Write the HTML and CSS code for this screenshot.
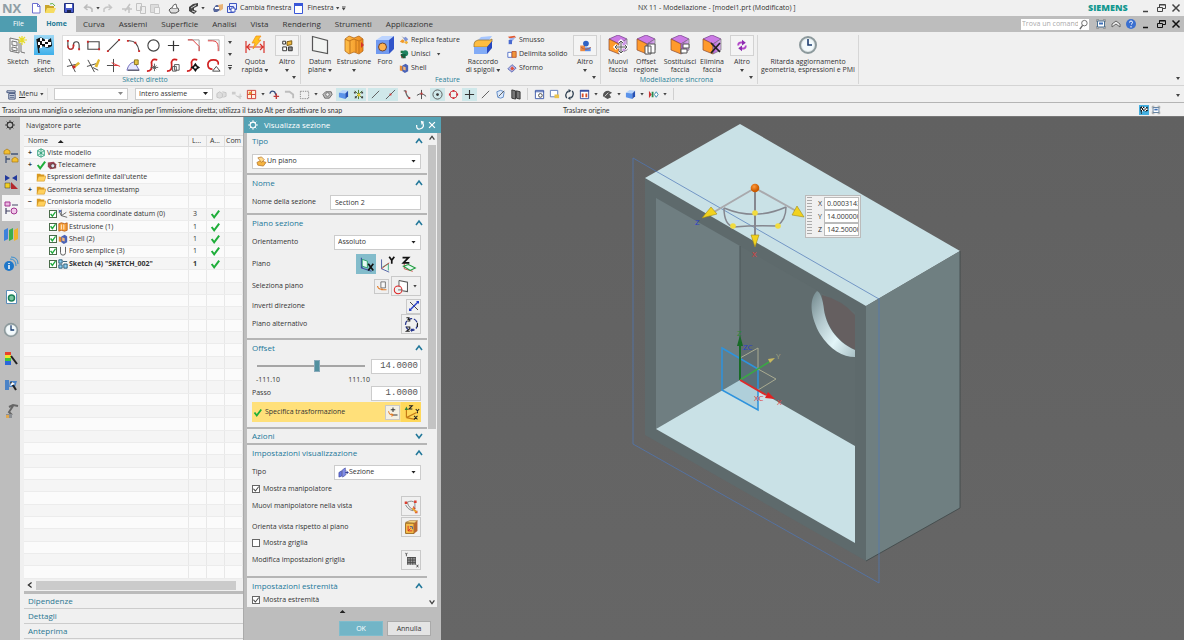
FILE: index.html
```
<!DOCTYPE html>
<html lang="it">
<head>
    <meta charset="UTF-8">
    <meta name="viewport" content="width=device-width, initial-scale=1.0">
    <title>NX 11 - Modellazione</title>
    <link rel="stylesheet" href="styles.css">
    <script src="app.js" defer></script>
</head>

<body>
    <!-- shared icons -->
    <svg class="defs" width="0" height="0">
        <defs>
            <linearGradient id="gOrange"><stop offset="0" stop-color="#ffc04a"/><stop offset="1" stop-color="#f08a1c"/></linearGradient>
            <linearGradient id="gPurple"><stop offset="0" stop-color="#b45ad8"/><stop offset="1" stop-color="#d9b4ec"/></linearGradient>
            <symbol id="new" viewBox="0 0 12 12"><path d="M2.500 1.500h5l2.500 2.500v7h-7.500z" fill="#fff" stroke="#6c6fd0"/><path d="M7.500 1.500v3h2.500" fill="none" stroke="#6c6fd0"/></symbol>
            <symbol id="open" viewBox="0 0 12 12"><path d="M1 3h4l1 1h4v7H1z" fill="#c9a52c"/><path d="M3 6h9l-2 5H1z" fill="#f6dc62"/><path d="M6 2q3-2 5 2" fill="none" stroke="#5bb04a"/></symbol>
            <symbol id="save" viewBox="0 0 12 12"><path d="M1.500 1.500h9v9h-9z" fill="#4a5ccc" stroke="#22307c"/><path d="M3 2h6v4H3z" fill="#fff"/><path d="M4 8h4v3H4z" fill="#1b2350"/></symbol>
            <symbol id="undo" viewBox="0 0 12 12"><path d="M10 10V7Q8 4 3 5.500M5.500 2.500L2.500 5.500l3 2.500" fill="none" stroke="#bbb" stroke-width="1.500"/></symbol>
            <symbol id="redo" viewBox="0 0 12 12"><path d="M2 10V7Q4 4 9 5.500M6.500 2.500L9.500 5.500l-3 2.500" fill="none" stroke="#c6c6c6" stroke-width="1.500"/></symbol>
            <symbol id="cut" viewBox="0 0 12 12"><path d="M1 7h10M4 9l5-7M8 5v6" fill="none" stroke="#c4c4c4" stroke-width="1.500"/></symbol>
            <symbol id="copy" viewBox="0 0 12 12"><path d="M1.500 1.500h5v7h-5zM5.500 4.500h5v7h-5z" fill="#eee" stroke="#c2c2c2"/></symbol>
            <symbol id="paste" viewBox="0 0 12 12"><path d="M1.500 2.500h8v8h-8z" fill="#ddd" stroke="#c6c6c6"/><path d="M5.500 5.500h5v6h-5z" fill="#f4f4f4" stroke="#c6c6c6"/></symbol>
            <symbol id="print" viewBox="0 0 12 12"><path d="M1 8l2-2h7l1 3-3 2H3z" fill="#ddd" stroke="#555"/><path d="M4 6q1-4 4-4l1 4" fill="#fff" stroke="#666"/></symbol>
            <symbol id="planet" viewBox="0 0 12 12"><path d="M2 9V5l4-3 5-1v3L7 6v2l3 1-3 3z" fill="#444"/><path d="M4 6l5-3M5 9l3 1" stroke="#ccc"/></symbol>
            <symbol id="eraser" viewBox="0 0 12 12"><path d="M1 7l3-4h4v5l-3 2H2z" fill="#56669c"/><path d="M6 3l5-1v5L8 9z" fill="#e9b376"/><path d="M3 5h4v2H3z" fill="#fff"/></symbol>
            <symbol id="wins" viewBox="0 0 12 12"><path d="M3.500 1.500h7v6h-7zM1.500 4.500h6v6h-6z" fill="#e9edff" stroke="#3d55c0"/><path d="M5 6h4v4H5z" fill="#fff" stroke="#3d55c0"/></symbol>
            <symbol id="win" viewBox="0 0 12 12"><path d="M1.500 1.500h8v10h-8z" fill="#fff" stroke="#3856d8"/><path d="M1 1h9v3H1z" fill="#3856d8"/></symbol>
            <symbol id="min" viewBox="0 0 12 12"><path d="M3 9.500h5" stroke="currentColor" stroke-width="1.500"/></symbol>
            <symbol id="restore" viewBox="0 0 12 12"><path d="M4.500 5V2.500h6v4H8M2.500 5.500h5v4h-5zM4 3h6" fill="none" stroke="currentColor"/></symbol>
            <symbol id="close" viewBox="0 0 12 12"><path d="M2.500 2.500l7 7M9.500 2.500l-7 7" stroke="currentColor" stroke-width="1.500"/></symbol>
            <symbol id="search" viewBox="0 0 12 12"><circle cx="7" cy="4.500" r="3" fill="none" stroke="#666"/><path d="M5 7l-3 4" stroke="#666" stroke-width="1.500"/></symbol>
            <symbol id="full" viewBox="0 0 12 12"><path d="M1.500 4V1.500H4M8 1.500h2.500V4M10.500 8v2.500H8M4 10.500H1.500V8" fill="none" stroke="#999"/><path d="M2.500 3h7v6h-7z" fill="#fff" stroke="#4a6f90"/><path d="M4 4.500h4v2H4z" fill="#3d6fb8"/></symbol>
            <symbol id="roof" viewBox="0 0 12 12"><path d="M2 6l4-3 4 3v3L6 6 2 9z" fill="#eee" stroke="#666"/></symbol>
            <symbol id="help" viewBox="0 0 12 12"><circle cx="6" cy="6" r="5" fill="#3a6fd0"/><path d="M4.500 4.500q0-1.500 1.500-1.500t1.500 1.500q0 1-1.500 2M6 8v1.500" stroke="#fff" fill="none"/></symbol>

            <!-- ribbon, large -->
            <symbol id="sketch" viewBox="0 0 20 20"><path d="M2 3l9 2v13l-9-2zM4 6l5 1v4l-5-1zM4 12l5 1v3l-5-1z" fill="#f4f4f4" stroke="#777" stroke-width="1"/><path d="M13 8v9l4 1" fill="none" stroke="#777"/><path d="M14 1v9M10 5h9M11 2l6 6M17 2l-6 6" stroke="#e6dc28" stroke-width="1.200"/></symbol>
            <symbol id="flag" viewBox="0 0 20 20"><path d="M3 4l2 14" stroke="#222" stroke-width="1.500"/><path d="M3 4q4-3 7 0t7-1l1 8q-4 3-7 1t-7 2z" fill="#111"/><path d="M6 3h2v3H6zM11 4h3v3h-3zM4 7h2v3H4zM8 6h3v3H8zM14 7h3v3h-3zM6 10h2v3H6zM11 9h3v3h-3z" fill="#fff"/></symbol>
            <symbol id="dim" viewBox="0 0 20 20"><path d="M1 6v12M19 6v12M2 12h16M5 9l-3 3 3 3M15 9l3 3-3 3" fill="none" stroke="#d9332b" stroke-width="1.200"/><path d="M11 1h5l-3 4h3l-8 9 2-6H7z" fill="#ffc21e" stroke="#ef8b1b" stroke-width=".7"/></symbol>
            <symbol id="altro" viewBox="0 0 20 20"><path d="M5.500 5.500h3v3h-3zM5.500 11.500h4v4h-4z" fill="#fff" stroke="#333"/><path d="M10 6l5-1v4l-5 1z" fill="#f0b73a" stroke="#7b5b12"/><path d="M11.500 11.500h4v4h-4z" fill="#888" stroke="#333"/></symbol>
            <symbol id="datum" viewBox="0 0 20 20"><path d="M2.500 1.500l15 4v13l-15-3z" fill="#f2f4f2" stroke="#555" stroke-width="1.200"/></symbol>
            <symbol id="extrude" viewBox="0 0 20 20"><path d="M1 4l4-3 5 2 5-2 4 3v12l-4 3-5-2-5 2-4-3z" fill="url(#gOrange)" stroke="#b5691a" stroke-width=".8"/><path d="M1 4l4 2 5-2 5 2 4-2M6 6v12M12 5v12M15 6v12" fill="none" stroke="#c4741a"/><path d="M17 7l3 3-3 3z" fill="#d5352b"/></symbol>
            <symbol id="hole" viewBox="0 0 20 20"><path d="M1 5l6-4h12l-5 4z" fill="#bcd4ff"/><path d="M1 5h13v14H1z" fill="#719af0"/><path d="M14 5l5-4v13l-5 5z" fill="#3154c9"/><circle cx="7.500" cy="12" r="4" fill="#ffb24e" stroke="#6c4436"/></symbol>
            <symbol id="blend" viewBox="0 0 20 20"><path d="M1 9l7-7 11-1-5 7z" fill="#a6c6ff"/><path d="M1 9q0-3 4-4h12l2-1v3l-5 5H1z" fill="#ffbd40" stroke="#8c6d30" stroke-width=".7"/><path d="M1 12h13v7H1z" fill="#82abf6"/><path d="M14 12l5-6v7l-5 6z" fill="#2748c0"/></symbol>
            <symbol id="balls" viewBox="0 0 20 20"><path d="M5 10h5v6H5z" fill="#eb8a44"/><circle cx="11" cy="8" r="3" fill="#2e62c4"/><path d="M10 12h6v4h-6z" fill="#5b8ce4"/><path d="M6 12q5 4 10 0" fill="none" stroke="#b75c3a"/></symbol>
            <symbol id="face" viewBox="0 0 20 20"><path d="M1 4l9-4 9 4-8 5z" fill="#cc7be6" stroke="#703a88" stroke-width=".7"/><path d="M1 4l10 5v10L1 15z" fill="#ff9a2c" stroke="#8a4b35" stroke-width=".7"/><path d="M11 9l8-5v11l-8 4z" fill="url(#gPurple)" stroke="#777" stroke-width=".7"/></symbol>
            <symbol id="fmove" viewBox="0 0 20 20"><use href="#face"/><path d="M13 6v12M7 12h12M11 8l2-2 2 2M11 16l2 2 2-2M9 10l-2 2 2 2M17 10l2 2-2 2" fill="none" stroke="#fff" stroke-width="3"/><path d="M13 6v12M7 12h12M11 8l2-2 2 2M11 16l2 2 2-2M9 10l-2 2 2 2M17 10l2 2-2 2" fill="none" stroke="#555"/></symbol>
            <symbol id="foffset" viewBox="0 0 20 20"><use href="#face"/><path d="M12 9h7v9h-7zM9 11h6v8H9z" fill="#fff" stroke="#555"/></symbol>
            <symbol id="freplace" viewBox="0 0 20 20"><use href="#face"/><path d="M13 9h6v4h-6zM11 14h6v4h-6z" fill="#fff" stroke="#555"/></symbol>
            <symbol id="fdelete" viewBox="0 0 20 20"><use href="#face"/><path d="M9 8l9 9M18 8l-9 10" stroke="#222" stroke-width="1.700"/></symbol>
            <symbol id="swirl" viewBox="0 0 20 20"><path d="M6 10q0-4 5-3M14 10q0 4-5 3" fill="none" stroke="#b247c8" stroke-width="2"/><path d="M10 4l4 3-4 3zM10 10l-4 3 4 3z" fill="#8d2ab0"/></symbol>
            <symbol id="clock" viewBox="0 0 20 20"><circle cx="10" cy="10" r="8" fill="#dfe6e8" stroke="#8c999c" stroke-width="2"/><circle cx="10" cy="10" r="6" fill="#f3fafc"/><path d="M10 4v6h4" fill="none" stroke="#1d3e70" stroke-width="1.600"/></symbol>

            <!-- gallery -->
            <symbol id="g1" viewBox="0 0 16 16"><path d="M2 3v5q0 4 3 4t3-4V7q0-3 3-3t3 4v4" fill="none" stroke="#444" stroke-width="1.200"/><path d="M2 8q0 4 3 4t3-4" fill="none" stroke="#cf2a2a" stroke-width="1.300"/><path d="M1 2h2v2H1zM7 7h2v2H7zM13 11h2v2h-2z" fill="#cf2a2a"/></symbol>
            <symbol id="g2" viewBox="0 0 16 16"><path d="M2 4h12v8H2z" fill="none" stroke="#444" stroke-width="1.200"/><path d="M1 3h2v2H1zM13 11h2v2h-2z" fill="#cf2a2a"/></symbol>
            <symbol id="g3" viewBox="0 0 16 16"><path d="M2 14L14 2" stroke="#444" stroke-width="1.200"/><path d="M1 13h2v2H1zM13 1h2v2h-2z" fill="#cf2a2a"/></symbol>
            <symbol id="g4" viewBox="0 0 16 16"><path d="M2 3q10-1 12 11" fill="none" stroke="#444" stroke-width="1.200"/><path d="M1 2h2v2H1zM9 4h2v2H9zM13 13h2v2h-2z" fill="#cf2a2a"/></symbol>
            <symbol id="g5" viewBox="0 0 16 16"><circle cx="8" cy="8" r="6" fill="none" stroke="#444" stroke-width="1.200"/></symbol>
            <symbol id="g6" viewBox="0 0 16 16"><path d="M8 3v11M2 8h12" stroke="#333" stroke-width="1.300"/></symbol>
            <symbol id="g7" viewBox="0 0 16 16"><path d="M2 2h12v12" fill="none" stroke="#999"/><path d="M2 2h5l7 7v5" fill="none" stroke="#d33"/></symbol>
            <symbol id="g8" viewBox="0 0 16 16"><path d="M2 2h12v12" fill="none" stroke="#aaa"/><path d="M2 3h5q6 0 6 7v4" fill="none" stroke="#d33"/></symbol>
            <symbol id="g9" viewBox="0 0 16 16"><path d="M3 1l7 14M1 9l13-3" stroke="#444"/><path d="M8 9l5-5 2 2-5 4z" fill="#e2b832"/><path d="M7 8h3v3H7z" fill="#cf2a2a"/></symbol>
            <symbol id="g10" viewBox="0 0 16 16"><path d="M2 2l7 13M1 9l10-3" stroke="#444"/><path d="M9 9l4-8 2 1-3 8z" fill="#e2b832"/><path d="M7 10l6 3" stroke="#444"/></symbol>
            <symbol id="g11" viewBox="0 0 16 16"><path d="M8 1v14M1 8h8" stroke="#444"/><path d="M6 5l9 4M8 8h5" stroke="#d33"/></symbol>
            <symbol id="g12" viewBox="0 0 16 16"><path d="M1 13q2-8 8-9l5 9z" fill="#e5e7ff" stroke="#6c68b8"/><path d="M9 2h4v5H9z" fill="#e5c345" stroke="#8a7420"/><path d="M2 13h12" stroke="#444"/></symbol>
            <symbol id="g13" viewBox="0 0 16 16"><path d="M1 14q6 0 5-7t6-5" fill="none" stroke="#d02020" stroke-width="1.800"/><path d="M9 6v8M5 10h8M7 8l4 4M11 8l-4 4" stroke="#555"/></symbol>
            <symbol id="g14" viewBox="0 0 16 16"><path d="M1 14q6 0 5-7t6-5" fill="none" stroke="#d02020" stroke-width="1.800"/><path d="M9 7h5v6H9zM7 9h4v5H7z" fill="#fff" stroke="#555"/></symbol>
            <symbol id="g15" viewBox="0 0 16 16"><path d="M1 14q6 0 5-7t6-5" fill="none" stroke="#d02020" stroke-width="1.800"/><path d="M10 5l2 3 3 2-3 2-2 3-2-3-3-2 3-2z" fill="#111"/><circle cx="10" cy="10" r="1.300" fill="#fff"/></symbol>
            <symbol id="g16" viewBox="0 0 16 16"><path d="M7 12q-5 0-5-5t6-5 5 5" fill="none" stroke="#d02020" stroke-width="1.800"/><path d="M11 9l4 5H7z" fill="#fff" stroke="#444"/></symbol>

            <!-- small feature icons -->
            <symbol id="pattern" viewBox="0 0 12 12"><path d="M1 8l3-3 3 2-2 3z" fill="#f09a2a"/><path d="M5 4l3-2 3 3-3 3z" fill="#7f94d6"/><path d="M6 9l3-2 2 2-2 2z" fill="#f0b23c"/><path d="M4 2l2 2" stroke="#889"/></symbol>
            <symbol id="unite" viewBox="0 0 12 12"><path d="M2 2h3v3H2z" fill="#274"/><circle cx="7.500" cy="5" r="3.500" fill="#1f8460"/><path d="M2 6h6v5H3z" fill="#17603f"/><path d="M2 8l3 3" stroke="#b33"/></symbol>
            <symbol id="shell" viewBox="0 0 12 12"><path d="M1 3l4 1v6L1 9z" fill="#e58a34"/><path d="M4 3l4-2 3 2v7l-4 2-3-2z" fill="#4a63b8"/><path d="M5 4l3 1v4L5 8z" fill="#f1b67c"/></symbol>
            <symbol id="chamfer" viewBox="0 0 12 12"><path d="M1 2l8-1 2 2-8 1z" fill="#e2582f"/><path d="M3 4l7-1-4 5H3z" fill="#9fb7f0"/><path d="M2 6h4v5H2z" fill="#4a6bd0"/></symbol>
            <symbol id="trim" viewBox="0 0 12 12"><path d="M1 4h5v6H1z" fill="#fff" stroke="#4464c4"/><path d="M6 3h5v7H6z" fill="#f0953a" stroke="#b9522b"/></symbol>
            <symbol id="draft" viewBox="0 0 12 12"><path d="M1 7l5-5 5 4-5 5z" fill="#b6bcec" stroke="#5461ae"/><path d="M4 7l2-3 3 3-3 2z" fill="#e0523e"/></symbol>

            <!-- selection bar -->
            <symbol id="menu" viewBox="0 0 12 12"><path d="M1 2h9v2H1zM3 5h7v6H3z" fill="#dfe4ee" stroke="#3c4f78"/><path d="M4 7h5M4 9h5" stroke="#3c4f78"/></symbol>
            <symbol id="t1" viewBox="0 0 12 12"><path d="M1 5l3-2 3 2v4l-3 1-3-1zM7 3l4 1v4l-3 1" fill="#ddd" stroke="#c4c4c4"/></symbol>
            <symbol id="t2" viewBox="0 0 12 12"><path d="M1 3h4v3H1z" fill="#ccc"/><path d="M5 7l5 3M10 5v6M7 8h5" stroke="#c8c8c8"/></symbol>
            <symbol id="t3" viewBox="0 0 12 12"><path d="M1.500 1.500h9v9h-9z" fill="#fff0e0" stroke="#d0342c"/><path d="M6 2v8M2 6h8" stroke="#d0342c"/><path d="M3 3h3v3H3z" fill="#e59a32"/></symbol>
            <symbol id="t4" viewBox="0 0 12 12"><path d="M1 5q1-4 5-2l2 4" fill="none" stroke="#334a7c" stroke-width="1.500"/><path d="M8 5v6M5 8h6" stroke="#c03a3a" stroke-width="1.500"/></symbol>
            <symbol id="t5" viewBox="0 0 12 12"><path d="M1 3h5l4 3v4" fill="none" stroke="#bdbdbd" stroke-width="2"/></symbol>
            <symbol id="t6" viewBox="0 0 12 12"><path d="M1.500 2.500h9v8h-9z" fill="none" stroke="#888" stroke-dasharray="1.500 1"/></symbol>
            <symbol id="t7" viewBox="0 0 12 12"><path d="M1 6l3-3h6l1 3-3 4H3z" fill="#bbb" stroke="#666"/><circle cx="6" cy="6" r="2" fill="#eee" stroke="#777"/></symbol>
            <symbol id="cube" viewBox="0 0 12 12"><path d="M1 4l4-3 6 1-3 3z" fill="#b7d4fa"/><path d="M1 4l7 1v6l-7-2z" fill="#5b93ea"/><path d="M8 5l3-3v6l-3 3z" fill="#2450b4"/></symbol>
            <symbol id="snap" viewBox="0 0 12 12"><path d="M2 2l8 8M10 2l-8 8M6 1v10" stroke="#4d7a28"/><path d="M5 5h3v3H5z" fill="#e9c82f"/><path d="M1 3h2v2H1zM9 8h2v2H9zM9 3h2v2H9zM2 8h2v2H2z" fill="#444"/></symbol>
            <symbol id="ln" viewBox="0 0 12 12"><path d="M2 10l8-8" stroke="#555"/></symbol>
            <symbol id="ln2" viewBox="0 0 12 12"><path d="M1 11L11 1" stroke="#555"/><path d="M5 5h2v2H5z" fill="#c33"/></symbol>
            <symbol id="curve" viewBox="0 0 12 12"><path d="M3 2h2q1 7 5 8" fill="none" stroke="#666" stroke-width="1.300"/><path d="M5 2h1v2H5zM8 9h2v2H8z" fill="#c33"/></symbol>
            <symbol id="inter" viewBox="0 0 12 12"><path d="M1 7q5-4 10 1M6 1v10" fill="none" stroke="#444"/><path d="M5 4h2v2H5z" fill="#c33"/></symbol>
            <symbol id="cen" viewBox="0 0 12 12"><circle cx="6" cy="6" r="5" fill="none" stroke="#555"/><circle cx="6" cy="6" r="1.500" fill="#333"/></symbol>
            <symbol id="quad" viewBox="0 0 12 12"><circle cx="6" cy="6" r="4" fill="none" stroke="#b44"/><path d="M5 1h2v2H5zM5 9h2v2H5zM1 5h2v2H1zM9 5h2v2H9z" fill="#d23"/></symbol>
            <symbol id="plus" viewBox="0 0 12 12"><path d="M6 1v10M1 6h10" stroke="#333" stroke-width="1.200"/></symbol>
            <symbol id="face2" viewBox="0 0 12 12"><path d="M2 3q4-3 8 0l-1 6q-3 2-6 0z" fill="#dbe9fb" stroke="#5b87c4"/><path d="M4 8l6-6" stroke="#555"/></symbol>
            <symbol id="grid2" viewBox="0 0 12 12"><path d="M2 1l4 1v9l-4-1zM7 2l4 1v8l-4-1z" fill="#777" stroke="#333"/></symbol>
            <symbol id="fit" viewBox="0 0 12 12"><path d="M1.500 1.500h9v9h-9zM1 3h10" fill="#fff" stroke="#3b58a8"/><circle cx="7" cy="7" r="2" fill="none" stroke="#444"/></symbol>
            <symbol id="layer" viewBox="0 0 12 12"><path d="M1.500 1.500h8v7h-8z" fill="#fff" stroke="#5d79b8"/><path d="M6 6h5v4H6z" fill="#ebc34b"/></symbol>
            <symbol id="rot" viewBox="0 0 12 12"><path d="M3 10q-3-5 2-8M9 2q3 5-2 8" fill="none" stroke="#345" stroke-width="1.400"/><path d="M5 0v4l3-2zM7 8v4L4 10z" fill="#345"/></symbol>
            <symbol id="tab" viewBox="0 0 12 12"><path d="M1.500 1.500h9v9h-9z" fill="#fff" stroke="#3a4fa0"/><path d="M1 1h10v2H1z" fill="#3a4fa0"/><path d="M3 5h2v4H3zM7 5h2v4H7z" fill="#d8502a"/></symbol>
            <symbol id="shade" viewBox="0 0 12 12"><path d="M1 8q0-6 6-6l4 2-3 2 2 3-4 2z" fill="#555"/><path d="M3 8l4-4" stroke="#ddd"/></symbol>
            <symbol id="assoc" viewBox="0 0 12 12"><path d="M1 2l3 4-3 4z" fill="#c33"/><path d="M4 3h2v6H4z" fill="#2a8b4f"/><path d="M7 6l2-3 2 3-2 3z" fill="#fff" stroke="#38a"/></symbol>

            <!-- navigator -->
            <symbol id="gear" viewBox="0 0 12 12"><circle cx="6" cy="6" r="3.500" fill="none" stroke="currentColor" stroke-width="1.300"/><path d="M6 0v3M6 9v3M0 6h3M9 6h3M2 2l2 2M8 8l2 2M10 2L8 4M4 8l-2 2" stroke="currentColor"/></symbol>
            <symbol id="views" viewBox="0 0 12 12"><path d="M2 3l4-2 4 2v6l-4 2-4-2z" fill="#e8faf3" stroke="#269a73"/><path d="M2 3l8 6M10 3L2 9M6 1v10" stroke="#269a73"/></symbol>
            <symbol id="cam" viewBox="0 0 12 12"><path d="M1 3l7-1 3 3v5l-7 1-3-3z" fill="#9a4256"/><circle cx="7" cy="7" r="2.500" fill="#dbe0f4" stroke="#532"/></symbol>
            <symbol id="folder" viewBox="0 0 12 12"><path d="M1 2h4l1 1h4v7H1z" fill="#d99a22"/><path d="M3 5h9l-2 6H1z" fill="#ffd05c" stroke="#c98b1b" stroke-width=".6"/></symbol>
            <symbol id="csys" viewBox="0 0 12 12"><path d="M4 1v7l7 2M4 8l6-4M1 2l3 6" fill="none" stroke="#555"/><path d="M1 1l3 3M4 1L1 4" stroke="#3a53b8"/></symbol>
            <symbol id="ext" viewBox="0 0 12 12"><path d="M1 2l3-1 4 1 3-1v9l-3 1-4-1-3 1z" fill="#f59b31" stroke="#b65c18"/><path d="M4 3v6M7 3v6" stroke="#fff"/></symbol>
            <symbol id="bore" viewBox="0 0 12 12"><path d="M3 1v7q0 3 3 3t3-3V1" fill="none" stroke="#444"/></symbol>
            <symbol id="skt" viewBox="0 0 12 12"><path d="M1 1h4v4H1zM1 7h4v4H1zM7 6h4v5H7z" fill="#8fd0f2" stroke="#1b4c66"/><path d="M6 3h5" stroke="#1b4c66"/></symbol>
            <symbol id="ok" viewBox="0 0 12 12"><path d="M2 6l3 4 6-8" fill="none" stroke="#1fae3a" stroke-width="2.400"/></symbol>
            <symbol id="s1" viewBox="0 0 16 16"><path d="M1 3l3-2 3 2v3H1zM9 11l3-2 3 2v3H9z" fill="#f3bf30" stroke="#a97a12" stroke-width=".7"/><path d="M3 8v7M3 11h4M8 6h7" stroke="#457" stroke-width="1.300"/></symbol>
            <symbol id="s2" viewBox="0 0 16 16"><path d="M2 1v6l5-3zM14 1v6L9 4z" fill="#233a9c"/><path d="M2 9h5v5H2z" fill="#f3cf22" stroke="#333" stroke-width=".5"/><path d="M8 8l7 7H8z" fill="#b3272c"/></symbol>
            <symbol id="s3" viewBox="0 0 16 16"><path d="M2 2h5v4H2z" fill="#eab7e0" stroke="#a2348f"/><path d="M3 8v6M3 11h4M9 5h6" stroke="#446" stroke-width="1.200"/><circle cx="11" cy="11" r="3" fill="#f0c8e9" stroke="#a2348f"/></symbol>
            <symbol id="s4" viewBox="0 0 16 16"><path d="M1 4l4-2v11l-4 2z" fill="#3c82dc"/><path d="M6 4l4-2v11l-4 2z" fill="#3cae4c"/><path d="M11 4l4-2v11l-4 2z" fill="#f1b32c"/></symbol>
            <symbol id="s5" viewBox="0 0 16 16"><circle cx="6" cy="10" r="5" fill="#1f77c9"/><path d="M6 7v1M6 9v4" stroke="#fff" stroke-width="1.500"/><path d="M7 3q6 0 6 7M8 1q7 0 7 7" fill="none" stroke="#3b8fd0"/></symbol>
            <symbol id="s6" viewBox="0 0 16 16"><path d="M3.500 1.500h7l3 3v10h-10z" fill="#fff" stroke="#5a8db8"/><circle cx="8.500" cy="9" r="3" fill="#7cc6a0" stroke="#1d8158" stroke-width="1.500"/></symbol>
            <symbol id="s8" viewBox="0 0 16 16"><path d="M2 1h6v3H2z" fill="#e8402c"/><path d="M2 4h6v3H2z" fill="#f2e22d"/><path d="M2 7h6v3H2z" fill="#3fc63c"/><path d="M2 10h6v4H2z" fill="#2c67dc"/><path d="M8 5l6 8" stroke="#222" stroke-width="2"/></symbol>
            <symbol id="s9" viewBox="0 0 16 16"><path d="M2 3h4v10H2zM7 4h7l-2 6H6z" fill="#4b83c7"/><path d="M8 5l5 8" stroke="#222" stroke-width="2"/><path d="M7 9l2-4 3 2z" fill="#fff"/></symbol>
            <symbol id="s10" viewBox="0 0 16 16"><path d="M6 4l4-2 5 1M10 3l-4 6 3 3" fill="none" stroke="#666" stroke-width="2"/><path d="M3 11h6v4H3z" fill="#8b8f94"/><path d="M3 12h3v3H3z" fill="#e0a850"/></symbol>

            <!-- dialog -->
            <symbol id="plane1" viewBox="0 0 12 12"><path d="M1 7l4-2 6 2-3 4-6-1z" fill="#f5b441" stroke="#a9661b" stroke-width=".7"/><path d="M2 2l4-1 3 3-3 3z" fill="#ffd988" stroke="#a9661b" stroke-width=".7"/></symbol>
            <symbol id="px" viewBox="0 0 20 20"><path d="M4 2v12l12 4M4 14l6-5" fill="none" stroke="#3c4e9c" stroke-width="1.300"/><path d="M5 4l6 2v8l-6-2z" fill="#e6faf2" stroke="#1f9a5d"/><path d="M12 9l6 8M18 9l-6 8" stroke="#111" stroke-width="2"/></symbol>
            <symbol id="py" viewBox="0 0 20 20"><path d="M3 4v11l9 4" fill="none" stroke="#3c4e9c"/><path d="M4 13l7-4v8" fill="#e6faf2" stroke="#2ea277"/><path d="M3 15l9-7" stroke="#c33"/><path d="M12 1l3 4 3-4M15 5v4" fill="none" stroke="#111" stroke-width="2"/></symbol>
            <symbol id="pz" viewBox="0 0 20 20"><path d="M5 7v8l10 3" fill="none" stroke="#c33"/><path d="M4 12l6-2 8 4-6 3z" fill="#e6faf2" stroke="#1f9a3d" stroke-width="1.300"/><path d="M3 2h7l-6 6h7" fill="none" stroke="#111" stroke-width="2"/></symbol>
            <symbol id="psel" viewBox="0 0 16 16"><path d="M6.500 2.500h6v8h-6z" fill="#f7f7f7" stroke="#555"/><path d="M2 8q1 5 7 4M7 13h7" fill="none" stroke="#e27b28" stroke-width="1.600"/></symbol>
            <symbol id="pinf" viewBox="0 0 20 20"><path d="M7 3l10 2v11l-6-1" fill="#fff" stroke="#555" stroke-width="1.200"/><path d="M7 3v7" stroke="#555"/><circle cx="6" cy="14" r="4.500" fill="none" stroke="#d22" stroke-width="1.200"/><path d="M6 14h5" stroke="#555"/></symbol>
            <symbol id="inv" viewBox="0 0 12 12"><path d="M2 2l8 8" stroke="#444"/><path d="M10 2l-8 8" stroke="#2840c8" stroke-width="1.500"/><path d="M8 1h3v3zM1 8v3h3z" fill="#2840c8"/></symbol>
            <symbol id="alt" viewBox="0 0 20 20"><circle cx="10" cy="10" r="7" fill="none" stroke="#26348c" stroke-width="1.500" stroke-dasharray="5 2"/><path d="M4 2h3l-1 2h2v2H5M17 8v5M4 13h4v2l-4 3h4" fill="none" stroke="#222" stroke-width="1.200"/><path d="M13 15l-3 4-1-4z" fill="#26348c"/></symbol>
            <symbol id="pt" viewBox="0 0 16 16"><path d="M8 2v6M5 5h6M8 12h6" stroke="#333" stroke-width="1.300"/><path d="M2 7q1 5 6 5M6 10l2 2-2 2" fill="none" stroke="#e27b28" stroke-width="1.400"/></symbol>
            <symbol id="xyz" viewBox="0 0 20 20"><path d="M4 7v9M4 16l12-6M4 16l10 2" stroke="#c57b16" stroke-width="1.400"/><path d="M7 2h4l-4 4h4M15 6l2 2 2-2M17 8v3M13 14l4 4M17 14l-4 4" fill="none" stroke="#222" stroke-width="1.200"/><path d="M2 7l2-4 2 4z" fill="#2f7f37"/></symbol>
            <symbol id="sez" viewBox="0 0 12 12"><path d="M1 6l3-2v6l-3 1z" fill="#6676e0" stroke="#27308c" stroke-width=".6"/><path d="M5 3l3-2v8l-3 2z" fill="#8793ee" stroke="#27308c" stroke-width=".6"/><path d="M8 6h3M9 4l2 2-2 2" fill="none" stroke="#27308c"/></symbol>
            <symbol id="mani" viewBox="0 0 20 20"><path d="M5 5q2 8 10 10M5 5q6-3 9 1v7M3 8q3 6 9 7" fill="none" stroke="#777"/><path d="M2 4h3v3H2zM13 3h3v3h-3zM12 9l3 4-3 1zM14 15h3v3h-3z" fill="#db3f30"/><path d="M11 12l5 5" stroke="#e8a32a" stroke-width="2"/></symbol>
            <symbol id="orient" viewBox="0 0 20 20"><path d="M3 4l5-2h9l-4 3z" fill="#ffe08a" stroke="#8f5d12" stroke-width=".7"/><path d="M3 5h10v12H3z" fill="#f9bf4b" stroke="#8f5d12"/><path d="M13 5l4-3v12l-4 3z" fill="#b8672e"/><path d="M6 8v6h5M6 14l3-3" fill="none" stroke="#d02020"/><path d="M8 9h3v3" stroke="#234ba8" fill="none"/></symbol>
            <symbol id="gridm" viewBox="0 0 20 20"><path d="M5 6h10v9H5z" fill="#999"/><path d="M5 6.500h10M5 9.500h10M5 12.500h10M5.500 6v9M8.500 6v9M11.500 6v9M14.500 6v9" stroke="#444"/><path d="M3 1l1 2 1-2M4 3v2M16 15l2 3M18 15l-2 3" stroke="#444" fill="none"/></symbol>
            <symbol id="up" viewBox="0 0 10 10"><path d="M2 7l3-4 3 4" fill="none" stroke="currentColor" stroke-width="1.600"/></symbol>
            <symbol id="down" viewBox="0 0 10 10"><path d="M2 3l3 4 3-4" fill="none" stroke="currentColor" stroke-width="1.600"/></symbol>
            <symbol id="reset" viewBox="0 0 12 12"><path d="M9.500 4q2 5-3 6.500T2 6" fill="none" stroke="#fff" stroke-width="1.500"/><path d="M7 1l4 1-3 4z" fill="#fff"/></symbol>
        </defs>
    </svg>

    <header class="titlebar">
        <b class="logo">NX</b>
        <div class="quick">
            <svg><use href="#new"/></svg>
            <svg><use href="#open"/></svg>
            <i class="gap"></i>
            <svg><use href="#save"/></svg>
            <i class="gap"></i>
            <svg><use href="#undo"/></svg>
            <i class="caret"></i>
            <svg><use href="#redo"/></svg>
            <i class="gap"></i>
            <svg><use href="#cut"/></svg>
            <svg><use href="#copy"/></svg>
            <svg><use href="#paste"/></svg>
            <i class="gap"></i>
            <svg><use href="#print"/></svg>
            <i class="gap"></i>
            <svg><use href="#planet"/></svg>
            <i class="caret"></i>
            <i class="gap"></i>
            <svg><use href="#eraser"/></svg>
            <svg><use href="#wins"/></svg>
            <a href="#">Cambia finestra</a>
            <svg><use href="#win"/></svg>
            <a href="#">Finestra</a>
            <i class="caret"></i>
            <i class="caret bar"></i>
        </div>
        <p class="doc-title">NX 11 - Modellazione - [model1.prt (Modificato) ]</p>
        <b class="brand">SIEMENS</b>
        <div class="win-btns">
            <svg><use href="#min"/></svg>
            <svg><use href="#restore"/></svg>
            <svg><use href="#close"/></svg>
        </div>
    </header>

    <nav class="tabs">
        <a class="file" href="#">File</a>
        <a class="active" href="#">Home</a>
        <a href="#">Curva</a>
        <a href="#">Assiemi</a>
        <a href="#">Superficie</a>
        <a href="#">Analisi</a>
        <a href="#">Vista</a>
        <a href="#">Rendering</a>
        <a href="#">Strumenti</a>
        <a href="#">Applicazione</a>
        <div class="finder">
            <input type="text" placeholder="Trova un comand" aria-label="Trova un comando">
            <svg><use href="#search"/></svg>
        </div>
        <div class="win-btns dark">
            <svg><use href="#full"/></svg>
            <svg><use href="#roof"/></svg>
            <svg><use href="#help"/></svg>
            <svg><use href="#min"/></svg>
            <svg><use href="#restore"/></svg>
            <svg><use href="#close"/></svg>
        </div>
    </nav>

    <section class="ribbon">
        <div class="group g-sketch">
            <div class="tools">
                <button class="tool w24"><svg><use href="#sketch"/></svg>Sketch</button>
                <button class="tool w28 on"><svg><use href="#flag"/></svg><span>Fine</span><span>sketch</span></button>
                <div class="gallery">
                    <svg><use href="#g1"/></svg><svg><use href="#g2"/></svg><svg><use href="#g3"/></svg><svg><use href="#g4"/></svg>
                    <svg><use href="#g5"/></svg><svg><use href="#g6"/></svg><svg><use href="#g7"/></svg><svg><use href="#g8"/></svg>
                    <svg><use href="#g9"/></svg><svg><use href="#g10"/></svg><svg><use href="#g11"/></svg><svg><use href="#g12"/></svg>
                    <svg><use href="#g13"/></svg><svg><use href="#g14"/></svg><svg><use href="#g15"/></svg><svg><use href="#g16"/></svg>
                </div>
                <div class="pager"><i class="caret"></i><i class="caret"></i><i class="caret bar"></i></div>
                <button class="tool w40"><svg><use href="#dim"/></svg><span>Quota</span><span>rapida <i class="caret"></i></span></button>
                <button class="tool w24 boxed"><svg><use href="#altro"/></svg>Altro<i class="caret"></i></button>
            </div>
            <h2>Sketch diretto</h2>
            <i class="caret corner"></i>
        </div>
        <div class="group g-feature">
            <div class="tools">
                <button class="tool w34"><svg><use href="#datum"/></svg><span>Datum</span><span>plane <i class="caret"></i></span></button>
                <button class="tool w34"><svg><use href="#extrude"/></svg>Estrusione<i class="caret"></i></button>
                <button class="tool w28"><svg><use href="#hole"/></svg>Foro</button>
                <div class="stack">
                    <button><svg><use href="#pattern"/></svg>Replica feature</button>
                    <button><svg><use href="#unite"/></svg>Unisci <i class="caret"></i></button>
                    <button><svg><use href="#shell"/></svg>Shell</button>
                </div>
                <button class="tool w40"><svg><use href="#blend"/></svg><span>Raccordo</span><span>di spigoli <i class="caret"></i></span></button>
                <div class="stack">
                    <button><svg><use href="#chamfer"/></svg>Smusso</button>
                    <button><svg><use href="#trim"/></svg>Delimita solido</button>
                    <button><svg><use href="#draft"/></svg>Sformo</button>
                </div>
                <button class="tool w24 boxed"><svg><use href="#balls"/></svg>Altro<i class="caret"></i></button>
            </div>
            <h2>Feature</h2>
            <i class="caret corner"></i>
        </div>
        <div class="group g-sync">
            <div class="tools">
                <button class="tool w28"><svg><use href="#fmove"/></svg><span>Muovi</span><span>faccia</span></button>
                <button class="tool w28"><svg><use href="#foffset"/></svg><span>Offset</span><span>regione</span></button>
                <button class="tool w40"><svg><use href="#freplace"/></svg><span>Sostituisci</span><span>faccia</span></button>
                <button class="tool w24"><svg><use href="#fdelete"/></svg><span>Elimina</span><span>faccia</span></button>
                <button class="tool w24 boxed last"><svg><use href="#swirl"/></svg>Altro<i class="caret"></i></button>
            </div>
            <h2>Modellazione sincrona</h2>
            <i class="caret corner"></i>
        </div>
        <div class="group g-delay">
            <div class="tools">
                <button class="tool wide"><svg><use href="#clock"/></svg><span>Ritarda aggiornamento</span><span>geometria, espressioni e PMI</span></button>
            </div>
        </div>
        <i class="caret far"></i>
    </section>

    <section class="selbar">
        <button class="menu-btn"><svg><use href="#menu"/></svg><span><u>M</u>enu</span> <i class="caret"></i></button>
        <div class="dd filter"><select aria-label="Filtro tipo" disabled><option></option></select></div>
        <div class="dd scope"><select aria-label="Ambito selezione"><option>Intero assieme</option></select></div>
        <div class="snaps">
            <svg><use href="#t1"/></svg>
            <svg><use href="#t2"/></svg>
            <svg><use href="#t3"/></svg>
            <i class="caret"></i>
            <svg><use href="#t4"/></svg>
            <svg><use href="#t5"/></svg>
            <svg><use href="#t6"/></svg>
            <i class="caret"></i>
            <svg><use href="#t7"/></svg>
            <div class="lit">
                <svg><use href="#cube"/></svg>
                <svg><use href="#snap"/></svg>
            </div>
            <div class="lit">
                <svg><use href="#ln"/></svg>
                <svg><use href="#ln2"/></svg>
            </div>
            <svg><use href="#curve"/></svg>
            <svg><use href="#inter"/></svg>
            <div class="lit"><svg><use href="#cen"/></svg></div>
            <svg><use href="#quad"/></svg>
            <div class="lit"><svg><use href="#plus"/></svg></div>
            <svg><use href="#ln"/></svg>
            <svg><use href="#face2"/></svg>
            <svg><use href="#grid2"/></svg>
            <i class="rule"></i>
            <svg><use href="#fit"/></svg>
            <svg><use href="#layer"/></svg>
            <svg><use href="#rot"/></svg>
            <svg><use href="#tab"/></svg>
            <i class="caret"></i>
            <svg><use href="#shade"/></svg>
            <i class="caret"></i>
            <svg><use href="#cube"/></svg>
            <i class="caret"></i>
            <svg><use href="#assoc"/></svg>
            <i class="caret"></i>
            <i class="rule"></i>
        </div>
        <i class="caret far"></i>
    </section>

    <section class="prompt">
        <p class="cue">Trascina una maniglia o seleziona una maniglia per l'immissione diretta; utilizza il tasto Alt per disattivare lo snap</p>
        <p class="state">Traslare origine</p>
        <div class="prompt-icons">
            <svg class="sel"><use href="#flag"/></svg>
            <svg><use href="#full"/></svg>
        </div>
    </section>

    <main>
        <aside class="resbar">
            <a class="gear" href="#" aria-label="Opzioni"><svg><use href="#gear"/></svg></a>
            <a href="#" aria-label="Navigatore assieme"><svg><use href="#s1"/></svg></a>
            <a href="#" aria-label="Navigatore vincoli"><svg><use href="#s2"/></svg></a>
            <a class="current" href="#" aria-label="Navigatore parte"><svg><use href="#s3"/></svg></a>
            <a href="#" aria-label="Libreria"><svg><use href="#s4"/></svg></a>
            <a class="tall" href="#" aria-label="HD3D"><svg><use href="#s5"/></svg></a>
            <a class="tall" href="#" aria-label="Web"><svg><use href="#s6"/></svg></a>
            <a class="tall" href="#" aria-label="Cronologia"><svg><use href="#clock"/></svg></a>
            <a href="#" aria-label="Materiali"><svg><use href="#s8"/></svg></a>
            <a href="#" aria-label="Processi"><svg><use href="#s9"/></svg></a>
            <a href="#" aria-label="Ruoli"><svg><use href="#s10"/></svg></a>
        </aside>

        <section class="navigator">
            <h1>Navigatore parte</h1>
            <div class="tree-wrap">
                <table class="tree">
                    <thead>
                        <tr><th>Nome <i class="sort"></i></th><th>L...</th><th>A...</th><th>Com</th></tr>
                    </thead>
                    <tbody id="tree-body">
                        <tr><td><div class="node"><b>+</b><svg><use href="#views"/></svg>Viste modello</div></td><td></td><td></td><td></td></tr>
                        <tr><td><div class="node"><b>+</b><svg><use href="#ok"/></svg><svg><use href="#cam"/></svg>Telecamere</div></td><td></td><td></td><td></td></tr>
                        <tr><td><div class="node"><b></b><svg><use href="#folder"/></svg>Espressioni definite dall'utente</div></td><td></td><td></td><td></td></tr>
                        <tr><td><div class="node"><b>+</b><svg><use href="#folder"/></svg>Geometria senza timestamp</div></td><td></td><td></td><td></td></tr>
                        <tr><td><div class="node"><b>−</b><svg><use href="#folder"/></svg>Cronistoria modello</div></td><td></td><td></td><td></td></tr>
                        <tr><td><label class="node sub"><input type="checkbox" checked><svg><use href="#csys"/></svg>Sistema coordinate datum (0)</label></td><td>3</td><td><svg><use href="#ok"/></svg></td><td></td></tr>
                        <tr><td><label class="node sub"><input type="checkbox" checked><svg><use href="#ext"/></svg>Estrusione (1)</label></td><td>1</td><td><svg><use href="#ok"/></svg></td><td></td></tr>
                        <tr><td><label class="node sub"><input type="checkbox" checked><svg><use href="#shell"/></svg>Shell (2)</label></td><td>1</td><td><svg><use href="#ok"/></svg></td><td></td></tr>
                        <tr><td><label class="node sub"><input type="checkbox" checked><svg><use href="#bore"/></svg>Foro semplice (3)</label></td><td>1</td><td><svg><use href="#ok"/></svg></td><td></td></tr>
                        <tr class="bold"><td><label class="node sub"><input type="checkbox" checked><svg><use href="#skt"/></svg>Sketch (4) "SKETCH_002"</label></td><td>1</td><td><svg><use href="#ok"/></svg></td><td></td></tr>
                    </tbody>
                </table>
            </div>
            <div class="hscroll"><svg><use href="#up"/></svg><div class="hthumb"></div></div>
            <a class="fold" href="#">Dipendenze</a>
            <a class="fold" href="#">Dettagli</a>
            <a class="fold" href="#">Anteprima</a>
        </section>

        <form class="dialog">
            <div class="dlg-head">
                <svg><use href="#gear"/></svg>
                <h1>Visualizza sezione</h1>
                <svg><use href="#reset"/></svg>
                <svg><use href="#close"/></svg>
            </div>
            <div class="dlg-body">
                <div class="fields">
                    <fieldset>
                        <h2>Tipo <svg><use href="#up"/></svg></h2>
                        <div class="row r24">
                            <div class="dd full icon"><svg><use href="#plane1"/></svg><select aria-label="Tipo"><option>Un piano</option></select></div>
                        </div>
                    </fieldset>
                    <fieldset>
                        <h2>Nome <svg><use href="#up"/></svg></h2>
                        <div class="row r22">
                            <label for="sec-name">Nome della sezione</label>
                            <input class="txt" id="sec-name" type="text" value="Section 2">
                        </div>
                    </fieldset>
                    <fieldset class="pad">
                        <h2>Piano sezione <svg><use href="#up"/></svg></h2>
                        <div class="row r22">
                            <label for="orient-sel">Orientamento</label>
                            <div class="dd"><select id="orient-sel"><option>Assoluto</option></select></div>
                        </div>
                        <div class="row r22">
                            <span>Piano</span>
                            <div class="btns planes">
                                <button type="button" class="ib flat picked" aria-label="X"><svg><use href="#px"/></svg></button>
                                <button type="button" class="ib flat" aria-label="Y"><svg><use href="#py"/></svg></button>
                                <button type="button" class="ib flat" aria-label="Z"><svg><use href="#pz"/></svg></button>
                            </div>
                        </div>
                        <div class="row r22">
                            <span>Seleziona piano</span>
                            <div class="btns">
                                <button type="button" class="ib small" aria-label="Finestra piano"><svg><use href="#psel"/></svg></button>
                                <button type="button" class="ib split" aria-label="Piano dedotto"><svg><use href="#pinf"/></svg><i class="caret"></i></button>
                            </div>
                        </div>
                        <div class="row r18">
                            <span>Inverti direzione</span>
                            <button type="button" class="ib small" aria-label="Inverti"><svg><use href="#inv"/></svg></button>
                        </div>
                        <div class="row r18">
                            <span>Piano alternativo</span>
                            <button type="button" class="ib" aria-label="Alterna"><svg><use href="#alt"/></svg></button>
                        </div>
                    </fieldset>
                    <fieldset class="pad">
                        <h2>Offset <svg><use href="#up"/></svg></h2>
                        <div class="row r20">
                            <input class="slider" type="range" min="-111" max="111" value="14" aria-label="Offset">
                            <input class="txt num" type="text" value="14.0000" aria-label="Valore offset">
                        </div>
                        <div class="limits"><span>-111.10</span><span>111.10</span></div>
                        <div class="row r18">
                            <label for="step">Passo</label>
                            <input class="txt num" id="step" type="text" value="1.0000">
                        </div>
                        <div class="row r20 hot">
                            <svg><use href="#ok"/></svg>
                            <span>Specifica trasformazione</span>
                            <button type="button" class="ib small" aria-label="Punto"><svg><use href="#pt"/></svg></button>
                            <button type="button" class="ib flat" aria-label="Manipolatore"><svg><use href="#xyz"/></svg></button>
                        </div>
                    </fieldset>
                    <fieldset class="folded">
                        <h2>Azioni <svg><use href="#down"/></svg></h2>
                    </fieldset>
                    <fieldset class="pad">
                        <h2>Impostazioni visualizzazione <svg><use href="#up"/></svg></h2>
                        <div class="row r22">
                            <label for="view-type">Tipo</label>
                            <div class="dd icon"><svg><use href="#sez"/></svg><select id="view-type"><option>Sezione</option></select></div>
                        </div>
                        <div class="row r12"><label class="check"><input type="checkbox" checked>Mostra manipolatore</label></div>
                        <div class="row r22">
                            <span>Muovi manipolatore nella vista</span>
                            <button type="button" class="ib" aria-label="Muovi"><svg><use href="#mani"/></svg></button>
                        </div>
                        <div class="row r20">
                            <span>Orienta vista rispetto al piano</span>
                            <button type="button" class="ib" aria-label="Orienta"><svg><use href="#orient"/></svg></button>
                        </div>
                        <div class="row r12"><label class="check"><input type="checkbox">Mostra griglia</label></div>
                        <div class="row r22">
                            <span>Modifica impostazioni griglia</span>
                            <button type="button" class="ib" aria-label="Griglia"><svg><use href="#gridm"/></svg></button>
                        </div>
                    </fieldset>
                    <fieldset class="end">
                        <h2>Impostazioni estremità <svg><use href="#up"/></svg></h2>
                        <div class="row r12"><label class="check"><input type="checkbox" checked>Mostra estremità</label></div>
                    </fieldset>
                </div>
                <div class="vscroll">
                    <svg><use href="#up"/></svg>
                    <div class="vthumb"></div>
                    <svg><use href="#down"/></svg>
                </div>
            </div>
            <div class="dlg-foot">
                <i class="sort"></i>
                <div class="actions">
                    <button type="button" class="ok">OK</button>
                    <button type="button" class="cancel">Annulla</button>
                </div>
            </div>
        </form>

        <section class="viewport">
            <svg class="scene" viewBox="441 117 743 523" preserveAspectRatio="xMidYMid slice">
                <defs>
                    <linearGradient id="gBore" x1="0" y1="0" x2="1" y2="1"><stop offset="0" stop-color="#70868a"/><stop offset=".35" stop-color="#b4c9ce"/><stop offset=".65" stop-color="#e2f5f8"/><stop offset="1" stop-color="#a9c0c5"/></linearGradient>
                    <radialGradient id="gBall" cx=".4" cy=".35"><stop offset="0" stop-color="#ff9a3c"/><stop offset="1" stop-color="#cc5c00"/></radialGradient>
                </defs>
                <!-- box -->
                <path d="M645 178L866 305V561L645 435z" fill="#5e6a6c"/>
                <path d="M656 198L740 246V380L656 429z" fill="#6f7e81"/>
                <path d="M740 246L855 312V446L740 380z" fill="#606c6e"/>
                <path d="M740 246V380" stroke="#4c5759"/>
                <path d="M740 380L855 446V543L656 429z" fill="#c9e1e6"/>
                <path d="M740 124L960 251L866 306L645 178z" fill="#c9e1e6"/>
                <path d="M866 306L960 251V508L866 561z" fill="#6f7f81"/>
                <path d="M960 251V508L866 561" fill="none" stroke="#3d4648" stroke-width=".8"/>
                <!-- hole -->
                <path d="M822 295Q842 300 855 315V350Q824 335 822 295z" fill="#655f60"/>
                <path d="M817 291C808 300 811 318 820 334C830 350 843 357 855 357V350C835 341 826 324 824 310C823 299 820 292 817 291z" fill="url(#gBore)"/>
                <!-- section plane -->
                <path d="M633 158L879 299V583L633 444z" fill="none" stroke="#4f78b8" stroke-opacity=".8" stroke-width=".9"/>
                <!-- manipulator -->
                <g fill="none" stroke="#85878f" stroke-width="1.500">
                    <path d="M724 208Q755 221 786 207"/>
                    <path d="M724 208Q724 225 734 227Q755 225 777 226Q786 220 786 207"/>
                    <path d="M755 188V236" stroke-width="2"/>
                    <path d="M755 188L714 212M755 188L798 212" stroke="#a9a9ad" stroke-width="2"/>
                </g>
                <path d="M702 218L711 207L717 214zM804 217L792 215L797 206zM755 247L751 235H759z" fill="#f2d21e" stroke="#a18c19" stroke-width=".6"/>
                <circle cx="733" cy="226" r="2.800" fill="#f2dc3e"/><circle cx="778" cy="226" r="2.800" fill="#f2dc3e"/><circle cx="755" cy="213" r="2.800" fill="#f2dc3e"/>
                <circle cx="755" cy="188" r="4.300" fill="url(#gBall)"/>
                <text x="695" y="225" class="ax blue">Z</text>
                <text x="752" y="257" class="ax red">X</text>
                <!-- datum csys -->
                <path d="M722 348L758 369V410L722 390z" fill="#3e7ea8" fill-opacity=".18" stroke="#2e93dd" stroke-width="1.500"/>
                <path d="M740 358L758 348V369L776 379L758 390" fill="none" stroke="#a9ab91"/>
                <path d="M740 380V342" stroke="#176b26" stroke-width="2"/><path d="M740 335l3 11h-6z" fill="#176b26"/>
                <path d="M740 380L769 362" stroke="#3aa845" stroke-width="1.500"/><path d="M775 358l-7 1 2 4z" fill="#c9b95e"/>
                <path d="M740 380L766 395" stroke="#dd2a2a" stroke-width="2"/><path d="M775 399l-10-1 3-6z" fill="#e02020"/>
                <text x="743" y="350" class="ax blue">ZC</text>
                <text x="737" y="336" class="ax green">Z</text>
                <text x="776" y="359" class="ax pale">Y</text>
                <text x="754" y="401" class="ax red">XC</text>
                <text x="777" y="405" class="ax red">X</text>
            </svg>
            <div class="coords">
                <i class="grip"></i>
                <div>
                    <label>X <input type="text" value="0.00031432"></label>
                    <label>Y <input type="text" value="14.0000000"></label>
                    <label>Z <input type="text" value="142.500000"></label>
                </div>
            </div>
        </section>
    </main>
</body>
</html>
```
FILE: app.js
```
// fill the rest of the part tree with blank striped rows
const body = document.getElementById('tree-body');

for (let i = 0; i < 25; i++) {
    const row = body.insertRow();
    for (let c = 0; c < 4; c++) {
        row.insertCell();
    }
}
```
FILE: styles.css
```
* {
    box-sizing: border-box;
}

body {
    margin: 0;
    height: 100vh;
    display: flex;
    flex-direction: column;
    overflow: hidden;
    background-color: #f0f0f0;
    font-family: "Open Sans", sans-serif;
    font-size: 7px;
    line-height: 8px;
    color: #333;
}

h1, h2, p {
    margin: 0;
    font-size: 7px;
    font-weight: normal;
}

a {
    color: inherit;
    text-decoration: none;
}

button, input, select {
    margin: 0;
    padding: 0;
    font: inherit;
    color: inherit;
    border: none;
    border-radius: 0;
    background: none;
}

svg {
    display: block;
    flex: none;
}

.defs {
    position: absolute;
}

.caret {
    display: inline-block;
    flex: none;
    width: 4px;
    height: 3px;
    background-color: #444;
    clip-path: polygon(0 0, 100% 0, 50% 100%);
}

.caret.bar {
    height: 5px;
    clip-path: polygon(0 0, 100% 0, 100% 20%, 0 20%, 0 40%, 100% 40%, 50% 100%, 0 40%);
}

.sort {
    display: inline-block;
    width: 6px;
    height: 3px;
    margin-left: 8px;
    background-color: #222;
    clip-path: polygon(50% 0, 100% 100%, 0 100%);
}

/* title bar */
.titlebar {
    height: 16px;
    flex: none;
    display: flex;
    align-items: center;
}

.logo {
    width: 30px;
    padding-left: 2px;
    font-size: 13px;
    line-height: 16px;
    color: #8f9ea5;
}

.quick {
    display: flex;
    align-items: center;
    gap: 2px;
}

.quick svg {
    width: 12px;
    height: 12px;
}

.gap {
    width: 3px;
}

.doc-title {
    margin: 0 auto;
}

.brand {
    width: 52px;
    font-size: 9px;
    font-weight: 800;
    color: #12978f;
}

.win-btns {
    display: flex;
    gap: 3px;
    padding-right: 2px;
    color: #444;
}

.win-btns svg {
    width: 12px;
    height: 12px;
}

.win-btns.dark {
    padding-left: 6px;
    color: #111;
}

/* tabs */
.tabs {
    height: 16px;
    flex: none;
    display: flex;
    align-items: center;
    background-color: #bdbdbd;
    font-size: 8px;
}

.tabs a {
    padding: 0 7px;
    line-height: 16px;
}

.tabs .file,
.tabs .active {
    padding: 0;
    font-size: 7px;
    text-align: center;
}

.tabs .file {
    width: 37px;
    background-color: #4f9db0;
    color: #fff;
}

.tabs .active {
    width: 39px;
    background-color: #f0f0f0;
    color: #1d7a95;
    font-weight: bold;
}

.finder {
    width: 68px;
    height: 11px;
    margin-left: auto;
    display: flex;
    align-items: center;
    background-color: #fff;
    font-size: 7px;
}

.finder input {
    width: 57px;
    padding-left: 1px;
}

.finder input::placeholder {
    color: #aaa;
}

.finder svg {
    width: 11px;
    height: 11px;
}

/* ribbon */
.ribbon {
    position: relative;
    height: 54px;
    flex: none;
    display: flex;
    padding: 3px 0 1px;
    border-bottom: 1px solid #d4d4d4;
}

.group {
    position: relative;
    display: flex;
    flex-direction: column;
    border-right: 1px solid #d6d6d6;
}

.g-sketch { width: 301px; padding-left: 6px; }
.g-feature { width: 300px; padding-left: 2px; }
.g-sync { width: 157px; padding-left: 3px; }
.g-delay { width: 101px; }

.group h2 {
    line-height: 8px;
    padding-right: 8px;
    text-align: center;
    color: #2a7f97;
}

.g-sketch h2 {
    padding-right: 16px;
}

.tools {
    height: 41px;
    flex: none;
    display: flex;
}

.tool {
    display: flex;
    flex-direction: column;
    align-items: center;
    text-align: center;
    white-space: nowrap;
}

.tool svg {
    width: 20px;
    height: 20px;
    margin-bottom: 3px;
}

.tool > .caret {
    margin-top: 3px;
}

.w24 { width: 24px; }
.w28 { width: 28px; }
.w34 { width: 34px; }
.w40 { width: 40px; }
.wide { width: 100px; }

.tool.on svg {
    background: linear-gradient(#9fd9f5, #3fb0ea);
}

.tool.boxed svg {
    width: 24px;
    height: 21px;
    margin-bottom: 2px;
    border: 1px solid #d2d2d2;
    background-color: #f4f4f4;
}

.tool.last {
    margin-left: 6px;
}

.gallery {
    width: 163px;
    height: 41px;
    margin-left: 4px;
    display: grid;
    grid-template-columns: repeat(8, 1fr);
    place-items: center;
    background-color: #fff;
    border: 1px solid #ddd;
}

.gallery svg {
    width: 15px;
    height: 15px;
}

.pager {
    width: 10px;
    display: flex;
    flex-direction: column;
    align-items: center;
    gap: 9px;
    padding-top: 6px;
}

.stack {
    display: flex;
    flex-direction: column;
    justify-content: space-between;
    height: 38px;
    width: 64px;
}

.stack button {
    display: flex;
    align-items: center;
    gap: 2px;
    white-space: nowrap;
}

.stack .caret {
    margin-left: 4px;
}

.stack svg {
    width: 10px;
    height: 10px;
}

.w40 + .stack {
    margin-left: 4px;
    width: 66px;
}

.corner {
    position: absolute;
    right: 4px;
    bottom: 5px;
}

.far {
    position: absolute;
    right: 4px;
    bottom: 5px;
}

/* selection bar */
.selbar {
    position: relative;
    height: 17px;
    flex: none;
    display: flex;
    align-items: center;
    border-bottom: 1px solid #b4b4b4;
}

.menu-btn {
    width: 48px;
    height: 12px;
    margin-right: 6px;
    padding-left: 6px;
    display: flex;
    align-items: center;
    gap: 2px;
    border-right: 1px solid #ddd;
}

.menu-btn svg {
    width: 11px;
    height: 11px;
}

.dd {
    position: relative;
    width: 87px;
    height: 15px;
    background-color: #fff;
    border: 1px solid #ccc;
}

.dd::after {
    content: "";
    position: absolute;
    right: 4px;
    top: 5px;
    width: 5px;
    height: 3px;
    background-color: #222;
    clip-path: polygon(0 0, 100% 0, 50% 100%);
}

.dd select {
    display: block;
    width: 100%;
    height: 100%;
    padding-left: 3px;
    appearance: none;
}

.dd.icon svg {
    position: absolute;
    left: 3px;
    top: 1px;
    width: 11px;
    height: 11px;
    pointer-events: none;
}

.dd.icon select {
    padding-left: 14px;
}

.dd.full {
    width: 100%;
}

.dd.filter {
    width: 74px;
    height: 12px;
    margin-right: 7px;
}

.dd.filter::after {
    background-color: #888;
}

.dd.scope {
    width: 78px;
    height: 12px;
    margin-right: 2px;
}

.selbar .dd::after {
    top: 3px;
}

.snaps {
    display: flex;
    align-items: center;
    gap: 2px;
}

.snaps svg {
    width: 13px;
    height: 13px;
    padding: 1px;
}

.snaps .caret {
    margin: 0 1px;
}

.lit {
    display: flex;
    gap: 2px;
    padding: 0 1px;
    background-color: #cfe8ea;
}

.rule {
    width: 1px;
    height: 12px;
    margin: 0 3px;
    background-color: #d0d0d0;
}

/* prompt line */
.prompt {
    height: 14px;
    flex: none;
    display: flex;
    align-items: center;
    padding-left: 2px;
    font-family: Lato, sans-serif;
    font-weight: bold;
    color: #333;
    border-bottom: 1px solid #777;
}

.cue {
    flex: 0 0 561px;
}

.prompt-icons {
    display: flex;
    gap: 2px;
    margin-left: auto;
    padding-right: 23px;
}

.prompt-icons svg {
    width: 10px;
    height: 10px;
}

.prompt-icons .sel {
    background-color: #44afe0;
}

/* main area */
main {
    flex: 1;
    min-height: 0;
    display: flex;
}

.resbar {
    width: 20px;
    display: flex;
    flex-direction: column;
    background-color: #bdbdbd;
}

.resbar a {
    height: 26px;
    padding-left: 2px;
    display: flex;
    align-items: center;
    justify-content: center;
}

.resbar svg {
    width: 16px;
    height: 16px;
}

.resbar .gear {
    height: 16px;
    margin-bottom: 10px;
    padding-left: 0;
}

.resbar .gear svg {
    width: 10px;
    height: 10px;
}

.resbar .tall {
    height: 33px;
}

.resbar .current {
    margin-left: 2px;
    padding-left: 0;
    background-color: #f4f4f4;
}

.navigator {
    width: 224px;
    padding-left: 4px;
    padding-bottom: 1px;
    display: flex;
    flex-direction: column;
    border-right: 1px solid #aaa;
}

.navigator h1 {
    padding-left: 2px;
    line-height: 18px;
}

.tree-wrap {
    flex: 1;
    min-height: 0;
    overflow: hidden;
}

.tree {
    width: 100%;
    height: 100%;
    table-layout: fixed;
    border-collapse: collapse;
}

.tree th {
    height: 11px;
    padding: 0 0 0 3px;
    font-weight: normal;
    text-align: left;
    white-space: nowrap;
    border: 1px solid #ddd;
    border-left: none;
    background-color: #f4f4f4;
}

.tree th:nth-child(2),
.tree th:nth-child(3) {
    width: 18px;
}

.tree th:nth-child(4) {
    width: 18px;
    padding-left: 1px;
    border-right: none;
}

.tree th:first-child {
    padding-left: 4px;
}

.tree td {
    height: 12px;
    padding: 0;
    border-right: 1px solid #e8e8e8;
    border-bottom: 1px solid #ececec;
    text-align: left;
}

.tree td:nth-child(2) {
    padding-left: 4px;
}

.tree td > svg {
    width: 10px;
    height: 10px;
    margin-left: 3px;
}

.tree tbody tr {
    background-color: #fbfbfb;
}

.tree tbody tr:nth-child(even) {
    background-color: #f5f5f5;
}

.bold {
    font-weight: bold;
}

.node {
    display: flex;
    align-items: center;
    height: 11px;
    white-space: nowrap;
}

.node b {
    width: 12px;
    padding-left: 4px;
}

.node svg {
    width: 10px;
    height: 10px;
    margin-right: 1px;
}

.node.sub {
    padding-left: 25px;
}

.node input {
    appearance: none;
    width: 8px;
    height: 8px;
    margin-right: 1px;
    border: 1px solid #4a6b4a;
    background-color: #fff;
}

.node input:checked::before {
    content: "";
    display: block;
    width: 6px;
    height: 6px;
    background-color: #1faa3c;
    clip-path: polygon(0 50%, 20% 35%, 40% 60%, 85% 0, 100% 15%, 40% 100%);
}

.hscroll {
    height: 12px;
    display: flex;
    align-items: center;
}

.hscroll svg {
    width: 8px;
    height: 8px;
    margin: 0 2px;
    transform: rotate(-90deg);
}

.hthumb {
    flex: 1;
    height: 9px;
    margin-right: 7px;
    background-color: #cbcbcb;
}

.hscroll + .fold {
    border-top: 3px solid #bbb;
    height: 18px;
}

.fold {
    height: 15px;
    padding-left: 4px;
    font-size: 8px;
    line-height: 14px;
    color: #2a7690;
    border-bottom: 1px solid #ccc;
}

/* section dialog */
.dialog {
    width: 197px;
    display: flex;
    flex-direction: column;
    background-color: #bdbdbd;
}

.dlg-head {
    height: 16px;
    padding: 0 4px;
    display: flex;
    align-items: center;
    gap: 2px;
    background-color: #55a2b4;
    color: #fff;
}

.dlg-head h1 {
    flex: 1;
    padding-left: 4px;
    font-size: 8px;
    line-height: 14px;
}

.dlg-head svg {
    width: 10px;
    height: 10px;
}

.dlg-body {
    flex: 1;
    min-height: 0;
    margin: 0 4px 0 3px;
    display: flex;
    overflow: hidden;
    background-color: #f0f0f0;
}

.fields {
    flex: 1;
}

fieldset {
    margin: 0;
    padding: 0 6px 0 5px;
    border: none;
    border-bottom: 2px solid #b5b5b5;
}

fieldset.pad {
    padding-bottom: 5px;
}

fieldset.end {
    border-bottom: none;
}

fieldset h2 {
    display: flex;
    justify-content: space-between;
    align-items: center;
    height: 16px;
    margin-right: -3px;
    font-size: 8px;
    color: #23789a;
}

fieldset h2 svg {
    width: 10px;
    height: 10px;
}

.folded h2 {
    height: 14px;
}

.row {
    display: flex;
    align-items: center;
    justify-content: space-between;
    white-space: nowrap;
}

.r12 { height: 12px; }
.r18 { height: 18px; }
.r20 { height: 20px; }
.r22 { height: 22px; }
.r24 { height: 24px; }

.txt {
    width: 91px;
    height: 15px;
    padding: 0 4px;
    background-color: #fff;
    border: 1px solid #ccc;
}

.num {
    width: 50px;
    padding: 0 2px;
    font-family: "Liberation Mono", monospace;
    font-size: 9px;
    text-align: right;
    color: #555;
}

.btns {
    display: flex;
    align-items: center;
    gap: 2px;
}

.planes {
    gap: 1px;
    padding-right: 3px;
}

.ib {
    display: flex;
    align-items: center;
    justify-content: center;
    width: 20px;
    height: 20px;
    border: 1px solid #c9c9c9;
}

.ib svg {
    width: 17px;
    height: 17px;
}

.ib.small {
    width: 15px;
    height: 15px;
}

.ib.small svg {
    width: 12px;
    height: 12px;
}

.ib.flat {
    border: none;
}

.ib.picked {
    background-color: #83bccb;
}

.ib.split {
    width: 30px;
    justify-content: space-between;
    padding: 0 3px 0 1px;
}

.slider {
    appearance: none;
    width: 108px;
    height: 14px;
    margin-left: 5px;
    background: linear-gradient(#a5a5a5, #a5a5a5) center / 100% 2px no-repeat;
}

.slider::-webkit-slider-thumb {
    appearance: none;
    width: 6px;
    height: 12px;
    background-color: #52909f;
    border: 1px solid #8ab;
}

.limits {
    display: flex;
    justify-content: space-between;
    width: 118px;
    padding-left: 4px;
}

.hot {
    background-color: #ffe07a;
}

.hot span {
    flex: 1;
    padding-left: 3px;
}

.hot > svg {
    width: 9px;
    height: 9px;
    margin-left: 1px;
}

.hot .small {
    background-color: #f4f0e4;
}

.hot .flat {
    margin-left: 1px;
    background-color: #ffd85a;
}

.check {
    display: flex;
    align-items: center;
    gap: 3px;
}

.check input {
    appearance: none;
    width: 8px;
    height: 8px;
    background-color: #fff;
    border: 1px solid #666;
}

.check input:checked::before {
    content: "";
    display: block;
    width: 6px;
    height: 6px;
    background-color: #444;
    clip-path: polygon(0 50%, 15% 40%, 40% 70%, 90% 5%, 100% 15%, 40% 95%);
}

.vscroll {
    width: 10px;
    display: flex;
    flex-direction: column;
    align-items: center;
    gap: 2px;
    color: #444;
}

.vscroll svg {
    width: 8px;
    height: 10px;
}

.vscroll svg:last-child {
    margin-top: auto;
}

.vthumb {
    width: 8px;
    height: 60%;
    background-color: #c3c3c3;
}

.dlg-foot {
    height: 33px;
    padding: 0 10px 4px;
    display: flex;
    flex-direction: column;
    justify-content: space-between;
    align-items: center;
}

.dlg-foot .sort {
    margin: 3px 0 0;
}

.actions {
    width: 100%;
    display: flex;
    justify-content: flex-end;
    gap: 4px;
}

.actions button {
    width: 44px;
    height: 15px;
    border: 1px solid #aaa;
    background-color: #e4e4e4;
}

.actions .ok {
    border-color: #7fbccc;
    background-color: #72b5c7;
    color: #fff;
}

/* graphics window */
.viewport {
    position: relative;
    flex: 1;
    min-width: 0;
    background: linear-gradient(#616161, #666);
}

.scene {
    width: 100%;
    height: 100%;
}

.ax {
    font-size: 8px;
}

.blue { fill: #2a3fc8; }
.red { fill: #e03a3a; }
.green { fill: #2c8a35; }
.pale { fill: #a0a483; }

.coords {
    position: absolute;
    left: 364px;
    top: 78px;
    display: flex;
    gap: 6px;
    padding: 1px;
    background-color: #f0f0f0;
    border: 1px solid #bbb;
}

.grip {
    width: 5px;
    background: repeating-linear-gradient(#aaa 0 1px, #f0f0f0 1px 3px);
}

.coords label {
    display: flex;
    align-items: center;
    gap: 2px;
}

.coords input {
    width: 35px;
    height: 13px;
    padding-left: 2px;
    background-color: #fff;
    border: 1px solid #bbb;
}
```
